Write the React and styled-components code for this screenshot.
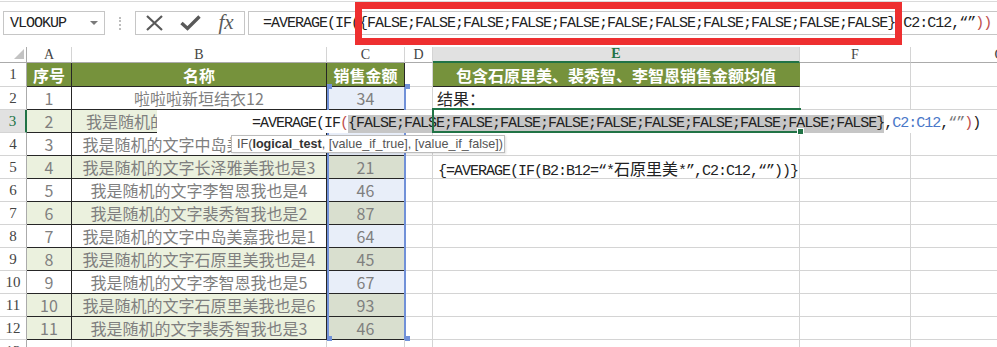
import React from 'react';
import styled, { createGlobalStyle } from 'styled-components';

const MONO = '"Liberation Mono", "Noto Sans CJK SC", monospace';
const CJK = '"Noto Sans CJK SC", "Noto Sans", sans-serif';
const SERIF = '"Liberation Serif", serif';

const GRID = '#d4d4d4';
const INK = '#262626';
const OLIVE = '#76923c';
const PALE = '#ebf1de';
const EXCEL = '#217346';
const REF = '#7191d8';

const GlobalStyle = createGlobalStyle`
  html, body { margin: 0; padding: 0; background: #fff; }
  body { overflow: hidden; font-family: ${CJK}; }
`;

const Window = styled.div`
  position: relative;
  width: 997px;
  height: 347px;
  overflow: hidden;
  background: #fff;
`;

// formula bar

const FormulaBar = styled.div`
  position: relative;
  box-sizing: border-box;
  display: flex;
  align-items: flex-start;
  height: 46px;
  margin-top: 1px;
  padding: 9px 0 0 3px;
  border-top: 1px solid #dadada;
`;

const NameBox = styled.div`
  box-sizing: border-box;
  display: flex;
  align-items: center;
  justify-content: space-between;
  width: 102px;
  height: 24px;
  padding: 0 6px;
  border: 1px solid #c6c6c6;
  font-family: ${MONO};
  font-size: 15px;
  letter-spacing: -1px;
  color: #222;
`;

const Caret = styled.span`
  width: 0;
  height: 0;
  border-left: 4px solid transparent;
  border-right: 4px solid transparent;
  border-top: 4px solid #7a7a7a;
`;

const Grip = styled.div`
  width: 0;
  height: 13px;
  margin: 6px 14px 0 14px;
  border-left: 2px dotted #bdbdbd;
`;

const Tools = styled.div`
  box-sizing: border-box;
  display: grid;
  grid-template-columns: repeat(3, 36px);
  align-items: center;
  justify-items: center;
  width: 110px;
  height: 24px;
  border: 1px solid #c6c6c6;
  color: #595959;
`;

const Fx = styled.span`
  font-family: ${SERIF};
  font-style: italic;
  font-size: 21px;
  line-height: 1;
  color: #5a5a5a;
  margin-top: -2px;
`;

const FormulaInput = styled.div`
  box-sizing: border-box;
  flex: 1;
  display: flex;
  align-items: center;
  height: 24px;
  margin-left: 3px;
  padding-left: 14px;
  border: 1px solid #c6c6c6;
  border-right: none;
  font-family: ${MONO};
  font-size: 15px;
  letter-spacing: -1px;
  color: #222;
  white-space: nowrap;
  overflow: hidden;
`;

const Callout = styled.div`
  position: absolute;
  left: 355px;
  top: 0;
  width: 547px;
  height: 43px;
  box-sizing: border-box;
  border: 7px solid #ee2f30;
`;

const Token = styled.span`
  color: ${p => p.$ink || '#222'};
`;

// sheet

const Sheet = styled.div`
  position: relative;
  display: grid;
  grid-template-columns: 27px 45px 255px 78px 28px 367px 111px 178px;
  grid-template-rows: 16px 24px repeat(12, 23px);
  width: 1089px;
`;

const Corner = styled.div`
  box-sizing: border-box;
  display: flex;
  align-items: flex-end;
  justify-content: flex-end;
  padding: 0 2px 3px 0;
  border-right: 1px solid #ababab;
  border-bottom: 1px solid #ababab;
`;

const ColHead = styled.div`
  box-sizing: border-box;
  display: flex;
  align-items: center;
  justify-content: center;
  border-right: 1px solid ${GRID};
  border-bottom: ${p => (p.$active ? `2px solid ${EXCEL}` : '1px solid #ababab')};
  background: ${p => (p.$active ? '#e1e1e1' : '#fff')};
  color: ${p => (p.$active ? EXCEL : '#444')};
  font-family: ${SERIF};
  font-size: 14px;
  font-weight: ${p => (p.$active ? 700 : 400)};
  line-height: 1;
`;

const RowHead = styled.div`
  box-sizing: border-box;
  display: flex;
  align-items: center;
  justify-content: center;
  border-right: ${p => (p.$active ? `2px solid ${EXCEL}` : '1px solid #ababab')};
  border-bottom: 1px solid ${GRID};
  background: ${p => (p.$active ? '#e1e1e1' : '#fff')};
  color: ${p => (p.$active ? EXCEL : '#444')};
  font-family: ${SERIF};
  font-size: 15px;
  line-height: 1;
`;

const Cell = styled.div`
  box-sizing: border-box;
  min-width: 0;
  display: flex;
  align-items: center;
  justify-content: ${p => p.$align || 'center'};
  padding: ${p => p.$pad || '0'};
  background: ${p => p.$fill || '#fff'};
  border-right: 1px solid ${p => p.$side || p.$edge || GRID};
  border-bottom: 1px solid ${p => p.$bottom || p.$edge || GRID};
  color: ${p => p.$ink || '#7f7f7f'};
  font-family: ${CJK};
  font-size: 16px;
  font-weight: ${p => (p.$bold ? 700 : 400)};
  line-height: 20px;
  white-space: nowrap;
  overflow: hidden;
`;

const ArrayFormula = styled.span`
  padding-top: 5px;
  font-family: ${MONO};
  font-size: 15px;
  letter-spacing: -1px;
  color: #222;
`;

const Wide = styled.span`
  font-family: ${CJK};
  font-size: 16px;
  letter-spacing: 0;
`;

const RefRange = styled.div`
  position: absolute;
  left: 327px;
  top: 40px;
  width: 79px;
  height: 253px;
  box-sizing: border-box;
  border-left: 2px solid ${REF};
  border-right: 2px solid ${REF};
`;

const Handle = styled.span`
  position: absolute;
  width: 5px;
  height: 5px;
  background: ${REF};
  left: ${p => (p.$right ? '76px' : '-2px')};
  top: ${p => (p.$bottom ? '249px' : '-3px')};
`;

const EditBox = styled.div`
  position: absolute;
  left: 157px;
  top: 63px;
  width: 840px;
  height: 23px;
  box-sizing: border-box;
  display: flex;
  align-items: flex-end;
  padding-left: 95px;
  background: #fff;
  font-family: ${MONO};
  font-size: 15px;
  letter-spacing: -1px;
  line-height: 18px;
  color: #222;
  white-space: nowrap;
`;

const Picked = styled.span`
  background: #c6c6c6;
`;

const ActiveCell = styled.div`
  position: absolute;
  left: 432px;
  top: 61px;
  width: 369px;
  height: 25px;
  box-sizing: border-box;
  border-top: 2px solid ${EXCEL};
  border-bottom: 2px solid ${EXCEL};
  border-left: 2px solid ${EXCEL};
`;

const FillHandle = styled.span`
  position: absolute;
  right: -3px;
  bottom: -4px;
  width: 5px;
  height: 5px;
  background: ${EXCEL};
  border: 1px solid #fff;
`;

const Tip = styled.div`
  position: absolute;
  left: 231px;
  top: 88px;
  width: 274px;
  height: 18px;
  box-sizing: border-box;
  display: flex;
  align-items: center;
  padding-left: 5px;
  background: #fff;
  border: 1px solid #bcbcbc;
  box-shadow: 1px 1px 2px rgba(0, 0, 0, 0.12);
  font-family: "Liberation Sans", Arial, sans-serif;
  font-size: 12.6px;
  color: #555;
  white-space: nowrap;
  overflow: hidden;
`;

const TipArg = styled.b`
  color: #333;
`;

const COLUMNS = ['A', 'B', 'C', 'D', 'E', 'F', 'G'];

const RECORDS = [
  { no: '1', name: '啦啦啦新垣结衣12', amount: '34', shade: false },
  { no: '2', name: '我是随机的文字李智恩我也是12', amount: '55', shade: true },
  { no: '3', name: '我是随机的文字中岛美嘉我也是2', amount: '58', shade: false },
  { no: '4', name: '我是随机的文字长泽雅美我也是3', amount: '21', shade: true },
  { no: '5', name: '我是随机的文字李智恩我也是4', amount: '46', shade: false },
  { no: '6', name: '我是随机的文字裴秀智我也是2', amount: '87', shade: true },
  { no: '7', name: '我是随机的文字中岛美嘉我也是1', amount: '64', shade: false },
  { no: '8', name: '我是随机的文字石原里美我也是4', amount: '45', shade: true },
  { no: '9', name: '我是随机的文字李智恩我也是5', amount: '67', shade: false },
  { no: '10', name: '我是随机的文字石原里美我也是6', amount: '93', shade: true },
  { no: '11', name: '我是随机的文字裴秀智我也是3', amount: '46', shade: true },
];

const FALSES = '{' + Array(11).fill('FALSE').join(';') + '}';

const E_COLUMN = {
  2: '结果：',
  5: (
    <ArrayFormula>
      {'{=AVERAGE(IF(B2:B12=“*'}
      <Wide>石原里美</Wide>
      {'*”,C2:C12,“”))}'}
    </ArrayFormula>
  ),
};

function CancelIcon() {
  return (
    <svg width="19" height="16" viewBox="0 0 19 16">
      <path d="M2 1 L17 15 M17 1 L2 15" stroke="#595959" strokeWidth="2.2" fill="none" />
    </svg>
  );
}

function EnterIcon() {
  return (
    <svg width="21" height="16" viewBox="0 0 21 16">
      <path d="M1.5 8 L7.5 13.5 L19.5 1.5" stroke="#595959" strokeWidth="3.4" fill="none" strokeLinejoin="miter" />
    </svg>
  );
}

export default function App() {
  return (
    <Window>
      <GlobalStyle />
      <FormulaBar>
        <NameBox>
          VLOOKUP
          <Caret />
        </NameBox>
        <Grip />
        <Tools>
          <CancelIcon />
          <EnterIcon />
          <Fx>fx</Fx>
        </Tools>
        <FormulaInput>
          =AVERAGE(IF({FALSES},C2:C12,“”<Token $ink="#c0504d">))</Token>
        </FormulaInput>
        <Callout />
      </FormulaBar>

      <Sheet>
        <Corner>
          <svg width="10" height="10" viewBox="0 0 10 10">
            <polygon points="10,0 10,10 0,10" fill="#c3c3c3" />
          </svg>
        </Corner>
        {COLUMNS.map(c => (
          <ColHead key={c} $active={c === 'E'}>{c}</ColHead>
        ))}

        <RowHead>1</RowHead>
        <Cell $fill={OLIVE} $edge={INK} $ink="#fff" $bold>序号</Cell>
        <Cell $fill={OLIVE} $edge={INK} $ink="#fff" $bold>名称</Cell>
        <Cell $fill={OLIVE} $edge={INK} $ink="#fff" $bold>销售金额</Cell>
        <Cell />
        <Cell $fill={OLIVE} $bottom={INK} $side={OLIVE} $ink="#fff" $bold>
          包含石原里美、裴秀智、李智恩销售金额均值
        </Cell>
        <Cell />
        <Cell />

        {RECORDS.map((r, i) => {
          const row = i + 2;
          return (
            <React.Fragment key={row}>
              <RowHead $active={row === 3}>{row}</RowHead>
              <Cell $fill={r.shade ? PALE : '#fff'} $edge={INK}>{r.no}</Cell>
              <Cell $fill={r.shade ? PALE : '#fff'} $edge={INK}>{r.name}</Cell>
              <Cell $fill={r.shade ? '#d9dfcf' : '#e8eef9'} $edge={INK}>{r.amount}</Cell>
              <Cell />
              <Cell $align="flex-start" $pad={row === 5 ? '0 0 0 5px' : '0 0 0 4px'} $ink={INK}>
                {E_COLUMN[row]}
              </Cell>
              <Cell />
              <Cell />
            </React.Fragment>
          );
        })}

        <RowHead>13</RowHead>
        {COLUMNS.map(c => (
          <Cell key={c} />
        ))}

        <RefRange>
          <Handle />
          <Handle $right />
          <Handle $bottom />
          <Handle $right $bottom />
        </RefRange>

        <EditBox>
          =AVERAGE(IF<Token $ink="#c0504d">(</Token>
          <Picked>{FALSES}</Picked>,<Token $ink="#4a78c8">C2:C12</Token>,
          <Token $ink="#777">“”</Token>
          <Token $ink="#c0504d">)</Token>)
        </EditBox>

        <ActiveCell>
          <FillHandle />
        </ActiveCell>

        <Tip>
          IF(<TipArg>logical_test</TipArg>, [value_if_true], [value_if_false])
        </Tip>
      </Sheet>
    </Window>
  );
}
